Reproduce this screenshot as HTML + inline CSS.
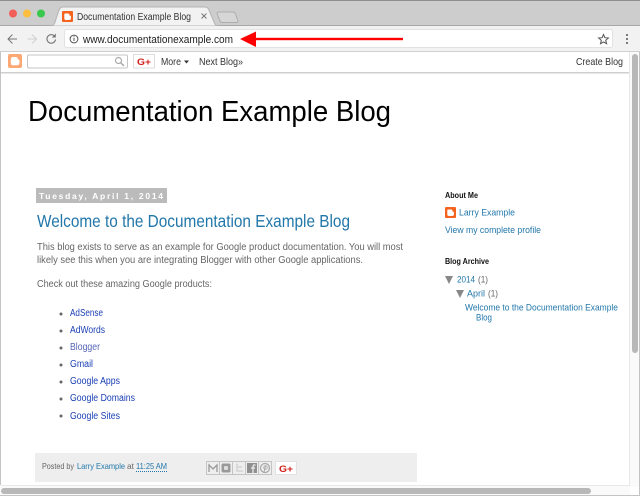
<!DOCTYPE html>
<html><head><meta charset="utf-8"><style>
html,body{margin:0;padding:0;background:#fff;width:640px;height:496px;overflow:hidden}
svg{display:block}
text{font-family:"Liberation Sans",sans-serif}
</style></head><body>
<svg width="640" height="496" viewBox="0 0 640 496" xmlns="http://www.w3.org/2000/svg">
<rect width="640" height="496" fill="#fff"/>
<!-- tab strip -->
<rect width="640" height="26" fill="#cdcdcd"/>
<rect width="640" height="1" fill="#8e8e8e"/>
<rect y="25" width="640" height="1" fill="#a8a8a8"/>
<circle cx="13" cy="13.500" r="4" fill="#f25f58"/>
<circle cx="27" cy="13.500" r="4" fill="#fbbe3f"/>
<circle cx="41" cy="13.500" r="4" fill="#39c84c"/>
<path d="M50 26C54 26 55 23 56 19L59 10C60 8 61 7 63 7H205C207 7 208 8 209 10L214 22C215 25 216 26 219 26Z" fill="#f2f2f2" stroke="#b4b4b4" stroke-width="1"/>
<path d="M217 13.500C217 12.500 218 12 219 12H233C234 12 235 12.500 235.500 14L238 21C238 22 237.500 22.500 237 22.500H222C221 22.500 220.500 22 220 21Z" fill="#d6d6d6" stroke="#adadad"/>
<rect x="62" y="11" width="11" height="11" rx="1" fill="#f4641f"/>
<path d="M65 13.500H68C69 13.500 69.500 14 69.500 15.500C70.500 15.500 71 16 71 17V18C71 19.500 70 20 69 20H66C65 20 64.300 19.500 64.300 18.500V14.500C64.300 14 64.500 13.500 65 13.500Z" fill="#fff"/>
<text x="77" y="20" font-size="10" fill="#333" textLength="114" lengthAdjust="spacingAndGlyphs">Documentation Example Blog</text>
<path d="M201.500 13.500L206.500 18.500M206.500 13.500L201.500 18.500" stroke="#777" stroke-width="1" fill="none"/>
<!-- toolbar -->
<rect y="26" width="640" height="25" fill="#f2f2f2"/>
<rect y="51" width="640" height="1" fill="#d0d0d0"/>
<path d="M17 39H8.500M12.500 34.500L8 39L12.500 43.500" stroke="#777" stroke-width="1" fill="none"/>
<path d="M36 39H27.500M32 34.500L36.500 39L32 43.500" stroke="#d0d0d0" stroke-width="1" fill="none"/>
<path d="M55.500 39.500A4.300 4.300 0 1 1 54.200 35.800" stroke="#777" stroke-width="1.100" fill="none"/>
<path d="M55.800 33.500V37.500H51.800Z" fill="#777"/>
<rect x="64.500" y="29.500" width="548" height="18" rx="2" fill="#fff" stroke="#e2e2e2"/>
<circle cx="74" cy="39" r="3.900" fill="none" stroke="#555" stroke-width="1"/>
<rect x="73.500" y="38" width="1" height="3" fill="#555"/>
<rect x="73.500" y="36.300" width="1" height="1" fill="#555"/>
<text x="83" y="43" font-size="11" fill="#222" textLength="150" lengthAdjust="spacingAndGlyphs">www.documentationexample.com</text>
<!-- red arrow -->
<rect x="253" y="37.800" width="150" height="2.400" fill="#f00"/>
<path d="M240 39L256 31.500V47Z" fill="#f00"/>
<path d="M603.500 34.500L604.900 37.700L608.400 38L605.700 40.300L606.600 43.700L603.500 41.900L600.500 43.700L601.300 40.300L598.600 38L602.100 37.700Z" fill="none" stroke="#555" stroke-width="1"/>
<circle cx="627" cy="35" r="1" fill="#555"/><circle cx="627" cy="39" r="1" fill="#555"/><circle cx="627" cy="43" r="1" fill="#555"/>
<!-- blogger navbar -->
<rect y="52" width="630" height="20" fill="#fff"/>
<rect y="72" width="630" height="1.500" fill="#cfcfcf"/>
<rect x="8" y="54" width="14" height="14" rx="2" fill="#fba874"/>
<path d="M13 57H16C17 57 18 58 18 59.500C19 59.500 19.500 60 19.500 61V63C19.500 64.500 18.500 65.300 17 65.300H13C11.500 65.300 10.800 64.500 10.800 63V59.500C10.800 58 11.500 57 13 57Z" fill="#fff"/>
<rect x="27.500" y="55" width="100" height="13" rx="1.500" fill="#fff" stroke="#c4c4c4"/>
<circle cx="118.500" cy="60.500" r="3" fill="none" stroke="#aaa" stroke-width="1.200"/>
<path d="M120.700 62.700L124 66" stroke="#aaa" stroke-width="1.500"/>
<rect x="133.500" y="54.500" width="21" height="13.500" fill="#fff" stroke="#ddd"/>
<text x="137" y="65" font-size="9.500" font-weight="bold" fill="#d0201a" textLength="14" lengthAdjust="spacingAndGlyphs">G+</text>
<text x="161" y="65" font-size="10.500" fill="#333" textLength="20" lengthAdjust="spacingAndGlyphs">More</text>
<path d="M184 60.500H189L186.500 63.500Z" fill="#333"/>
<text x="199" y="65" font-size="10.500" fill="#333" textLength="44" lengthAdjust="spacingAndGlyphs">Next Blog»</text>
<text x="576" y="65" font-size="10.500" fill="#333" textLength="47" lengthAdjust="spacingAndGlyphs">Create Blog</text>
<!-- window left edge -->
<rect x="0" y="52" width="1" height="444" fill="#c4c4c4"/>
<!-- page -->
<text x="28" y="121" font-size="29" fill="#000" textLength="363" lengthAdjust="spacingAndGlyphs">Documentation Example Blog</text>
<rect x="36" y="188" width="131" height="15" fill="#bbb"/>
<text x="39" y="199" font-size="8.500" font-weight="bold" fill="#fff" textLength="124" lengthAdjust="spacing">Tuesday, April 1, 2014</text>
<text x="37" y="227" font-size="17.500" fill="#2277aa" textLength="313" lengthAdjust="spacingAndGlyphs">Welcome to the Documentation Example Blog</text>
<g font-size="10" fill="#666">
<text x="37" y="250" textLength="366" lengthAdjust="spacingAndGlyphs">This blog exists to serve as an example for Google product documentation. You will most</text>
<text x="37" y="263" textLength="326" lengthAdjust="spacingAndGlyphs">likely see this when you are integrating Blogger with other Google applications.</text>
<text x="37" y="287" textLength="175" lengthAdjust="spacingAndGlyphs">Check out these amazing Google products:</text>
</g>
<g fill="#666">
<circle cx="61" cy="314" r="1.500"/><circle cx="61" cy="331" r="1.500"/><circle cx="61" cy="348" r="1.500"/><circle cx="61" cy="365" r="1.500"/><circle cx="61" cy="382" r="1.500"/><circle cx="61" cy="399" r="1.500"/><circle cx="61" cy="416" r="1.500"/>
</g>
<g font-size="10" fill="#1a3fb5">
<text x="70" y="316" textLength="33" lengthAdjust="spacingAndGlyphs">AdSense</text>
<text x="70" y="333" textLength="35" lengthAdjust="spacingAndGlyphs">AdWords</text>
<text x="70" y="350" textLength="30" lengthAdjust="spacingAndGlyphs" fill="#5565b8">Blogger</text>
<text x="70" y="367" textLength="23" lengthAdjust="spacingAndGlyphs">Gmail</text>
<text x="70" y="384" textLength="50" lengthAdjust="spacingAndGlyphs">Google Apps</text>
<text x="70" y="401" textLength="65" lengthAdjust="spacingAndGlyphs">Google Domains</text>
<text x="70" y="419" textLength="50" lengthAdjust="spacingAndGlyphs">Google Sites</text>
</g>
<!-- post footer -->
<rect x="35" y="453" width="382" height="29" fill="#eee"/>
<g font-size="8.500" fill="#666">
<text x="42" y="469" textLength="32" lengthAdjust="spacingAndGlyphs">Posted by</text>
<text x="77" y="469" textLength="48" lengthAdjust="spacingAndGlyphs" fill="#2277aa">Larry Example</text>
<text x="127" y="469" textLength="7" lengthAdjust="spacingAndGlyphs">at</text>
<text x="136" y="469" textLength="31" lengthAdjust="spacingAndGlyphs" fill="#2277aa">11:25 AM</text>
</g>
<path d="M136 471.500H167" stroke="#2277aa" stroke-width="1" stroke-dasharray="1 1"/>
<g>
<rect x="206.500" y="461.500" width="13" height="13" fill="#eee" stroke="#c4c4c4"/>
<path d="M209 472V465L213 469L217 465V472" fill="none" stroke="#999" stroke-width="1.300"/>
<rect x="219.500" y="461.500" width="13" height="13" fill="#eee" stroke="#c4c4c4"/>
<rect x="221.500" y="463.500" width="9" height="9" rx="1.500" fill="#999"/>
<rect x="224" y="466" width="4" height="4" rx="1" fill="#ddd"/>
<rect x="232.500" y="461.500" width="13" height="13" fill="#eee" stroke="#c4c4c4"/>
<path d="M237 463.500V471H243M237 467H242" fill="none" stroke="#d4d4d4" stroke-width="1.600"/>
<rect x="245.500" y="461.500" width="13" height="13" fill="#eee" stroke="#c4c4c4"/>
<rect x="247" y="463" width="10" height="10" fill="#909090"/>
<path d="M255.500 465H254C253 465 253 466 253 467V473M251 468H255" fill="none" stroke="#eee" stroke-width="1.200"/>
<rect x="258.500" y="461.500" width="13" height="13" fill="#eee" stroke="#c4c4c4"/>
<circle cx="265" cy="468" r="4.500" fill="none" stroke="#aaa" stroke-width="1.300"/>
<path d="M264 472L265.500 466" stroke="#aaa" stroke-width="1"/>
<circle cx="265.500" cy="467.500" r="1.800" fill="none" stroke="#aaa" stroke-width=".8"/>
<rect x="275.500" y="461.500" width="21" height="13" fill="#fff" stroke="#e2e2e2"/>
<text x="279" y="472" font-size="9.500" font-weight="bold" fill="#d0201a" textLength="14" lengthAdjust="spacingAndGlyphs">G+</text>
</g>
<!-- sidebar -->
<g font-size="8.500" font-weight="bold" fill="#111">
<text x="445" y="198" textLength="33" lengthAdjust="spacingAndGlyphs">About Me</text>
<text x="445" y="264" textLength="44" lengthAdjust="spacingAndGlyphs">Blog Archive</text>
</g>
<rect x="445" y="207" width="11" height="11" rx="1" fill="#f4641f"/>
<path d="M448 209.500H451C452 209.500 452.500 210 452.500 211.500C453.500 211.500 454 212 454 213V214C454 215.500 453 216 452 216H449C448 216 447.300 215.500 447.300 214.500V210.500C447.300 210 447.500 209.500 448 209.500Z" fill="#fff"/>
<g font-size="9.500" fill="#2277aa">
<text x="459" y="215.500" textLength="56" lengthAdjust="spacingAndGlyphs">Larry Example</text>
<text x="445" y="233" textLength="96" lengthAdjust="spacingAndGlyphs">View my complete profile</text>
<text x="457" y="282.500" textLength="18" lengthAdjust="spacingAndGlyphs">2014</text>
<text x="478" y="282.500" textLength="10" lengthAdjust="spacingAndGlyphs" fill="#666">(1)</text>
<text x="467" y="296.500" textLength="18" lengthAdjust="spacingAndGlyphs">April</text>
<text x="488" y="296.500" textLength="10" lengthAdjust="spacingAndGlyphs" fill="#666">(1)</text>
<text x="465" y="310.500" textLength="153" lengthAdjust="spacingAndGlyphs">Welcome to the Documentation Example</text>
<text x="476" y="320.500" textLength="16" lengthAdjust="spacingAndGlyphs">Blog</text>
</g>
<path d="M445 276H453L449 284Z" fill="#888"/>
<path d="M456 290H464L460 298Z" fill="#888"/>
<!-- scrollbars -->
<rect x="629" y="52" width="11" height="435" fill="#fafafa"/>
<rect x="629" y="52" width="1" height="435" fill="#e8e8e8"/>
<rect x="632" y="54" width="6" height="299" rx="3" fill="#b8b8b8"/>
<rect x="0" y="485" width="630" height="11" fill="#fafafa"/>
<rect x="1" y="485" width="629" height="1" fill="#e8e8e8"/>
<rect x="1" y="488" width="590" height="6" rx="3" fill="#b8b8b8"/>
<rect x="0" y="495" width="640" height="1" fill="#c4c4c4"/>
<rect x="639" y="52" width="1" height="444" fill="#c4c4c4"/>
</svg>
</body></html>
